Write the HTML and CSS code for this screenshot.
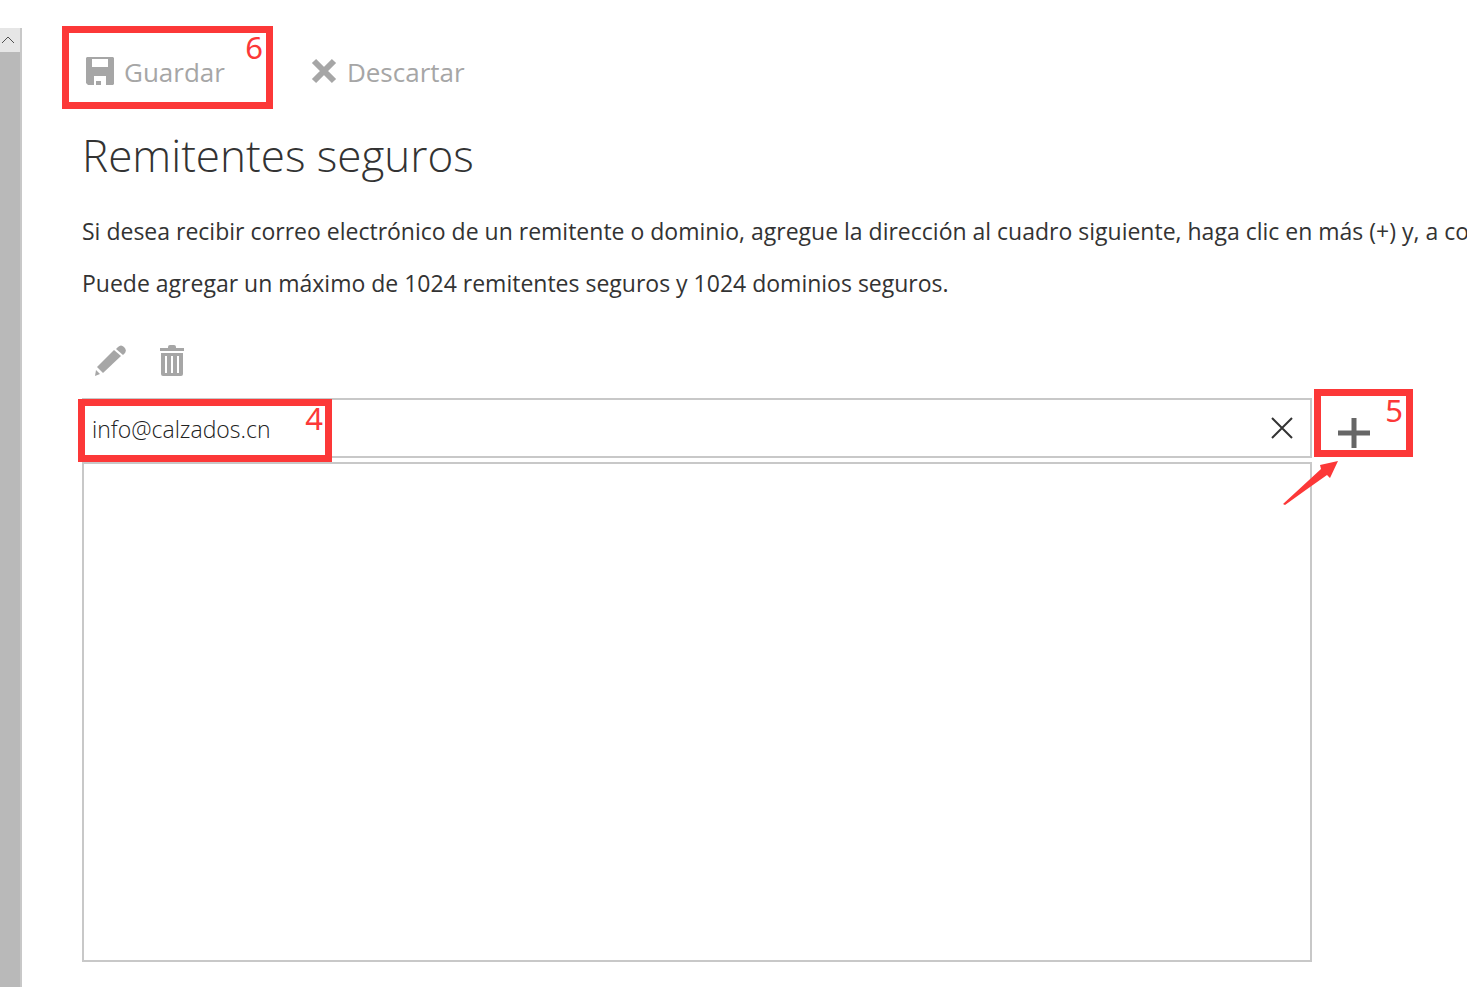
FILE: index.html
```
<!DOCTYPE html>
<html lang="es">
<head>
    <meta charset="UTF-8">
    <title>Remitentes seguros</title>
    <link rel="stylesheet" href="styles.css">
</head>
<body>
<div class="scrollbar">
    <button class="scroll-up" type="button" aria-label="Subir">
        <svg width="14" height="8" viewBox="0 0 14 8"><path d="M1 7L7 1L13 7"/></svg>
    </button>
</div>
<main class="content">
    <div class="toolbar">
        <div class="marked">
            <button class="command" type="button">
                <svg class="fill" width="28" height="30" viewBox="0 0 28 30">
                    <path fill-rule="evenodd" d="M1 0H27L28 1V27L27 28H20V19H8V28H2L0 26V1ZM6 2V10H22V2Z"/>
                    <path d="M10 24H15V28H10Z"/>
                </svg>
                Guardar
            </button>
            <span class="mark mark-save">6</span>
        </div>
        <button class="command" type="button">
            <svg width="26" height="30" viewBox="0 0 26 30"><path class="cross" d="M3 4L23 24M23 4L3 24"/></svg>
            Descartar
        </button>
    </div>
    <h1>Remitentes seguros</h1>
    <p>Si desea recibir correo electrónico de un remitente o dominio, agregue la dirección al cuadro siguiente, haga clic en más (+) y, a con</p>
    <p>Puede agregar un máximo de 1024 remitentes seguros y 1024 dominios seguros.</p>
    <div class="actions">
        <button type="button" aria-label="Editar">
            <svg class="fill" width="32" height="32" viewBox="0 0 32 32">
                <path d="M3 22L20 5L27 11L9 28Z"/>
                <path d="M22 4L24 2Q27 -1 30 2Q33 5 31 8L29 10Z"/>
                <path d="M2 25L6 29L1 31Z"/>
            </svg>
        </button>
        <button type="button" aria-label="Eliminar">
            <svg class="fill" width="24" height="32" viewBox="0 0 24 32">
                <path d="M0 3H8V2Q8 0 10 0H14Q16 0 16 2V3H24V6H0Z"/>
                <path fill-rule="evenodd" d="M1 8H23V29Q23 31 21 31H3Q1 31 1 29ZM5 11V28H7V11ZM11 11V28H13V11ZM17 11V28H19V11Z"/>
            </svg>
        </button>
    </div>
    <form class="entry">
        <div class="field">
            <input type="text" aria-label="Remitente o dominio" value="info@calzados.cn">
            <button class="clear" type="button" aria-label="Borrar">
                <svg width="22" height="22" viewBox="0 0 22 22"><path d="M1 1L21 21M21 1L1 21"/></svg>
            </button>
            <span class="mark mark-field">4</span>
        </div>
        <div class="add-cell">
            <button class="add" type="button" aria-label="Agregar">
                <svg width="32" height="30" viewBox="0 0 32 30"><path d="M16 0V30M0 15H32"/></svg>
            </button>
            <span class="mark mark-add">5</span>
            <svg class="arrow" width="56" height="46" viewBox="0 0 56 46"><path d="M0 43L38 8L37 4L55 0L47 17L44 14Q24 28 2 44Z"/></svg>
        </div>
    </form>
    <div class="list"></div>
</main>
</body>
</html>
```

FILE: styles.css
```
* {
    box-sizing: border-box;
}

body {
    margin: 0;
    display: flex;
    min-height: 100vh;
    background: #fff;
    color: #333;
    font-family: "Open Sans", "Noto Sans", sans-serif;
}

button {
    display: flex;
    align-items: center;
    padding: 0;
    border: 0;
    background: none;
    font-family: inherit;
    cursor: pointer;
}

svg {
    display: block;
    fill: none;
}

.scrollbar {
    flex: none;
    width: 22px;
    margin-top: 28px;
    border-right: 2px solid #c8c8c8;
    background: #b9b9b9;
}

.scroll-up {
    justify-content: center;
    width: 100%;
    height: 24px;
    padding-right: 4px;
    background: #e6e6e6;
}

.scroll-up svg {
    stroke: #505050;
    stroke-width: 1;
}

.content {
    flex: 1;
    min-width: 0;
    display: flex;
    flex-direction: column;
    padding: 52px 0 25px 60px;
    overflow: hidden;
}

.toolbar {
    display: flex;
    gap: 86px;
    padding-left: 4px;
}

.marked {
    position: relative;
}

.command {
    gap: 10px;
    height: 40px;
    color: #a6a6a6;
    font-size: 26px;
    line-height: 40px;
}

.fill {
    fill: #a6a6a6;
}

.cross {
    stroke: #a6a6a6;
    stroke-width: 6;
}

h1 {
    margin: 31px 0 28px;
    font-size: 44px;
    font-weight: 300;
    line-height: 64px;
}

p {
    margin: 0 0 20px;
    font-size: 23px;
    line-height: 32px;
    white-space: nowrap;
}

.actions {
    display: flex;
    align-items: center;
    gap: 34px;
    margin: 26px 0 21px;
    padding-left: 12px;
}

.entry {
    display: flex;
    margin-bottom: 4px;
}

.field {
    position: relative;
    flex: 1;
    display: flex;
    height: 60px;
    padding: 0 17px 0 8px;
    border: 2px solid #c8c8c8;
}

.field input {
    flex: 1;
    min-width: 0;
    padding: 2px 0 0;
    border: 0;
    outline: 0;
    color: #222;
    font-family: inherit;
    font-size: 23px;
    font-weight: 300;
}

.clear svg {
    stroke: #333;
    stroke-width: 2;
}

.add-cell {
    position: relative;
    display: flex;
    width: 155px;
    padding: 10px 0 0 26px;
}

.add svg {
    stroke: #666;
    stroke-width: 5;
}

.list {
    flex: 1;
    min-height: 200px;
    margin-right: 155px;
    border: 2px solid #c8c8c8;
}

/* numbered red frames over the controls */
.mark {
    position: absolute;
    border: 7px solid #fc3838;
    color: #fc3838;
    font-family: "Noto Sans", sans-serif;
    font-size: 31px;
    line-height: 28px;
    text-align: right;
    pointer-events: none;
}

.mark-save {
    top: -26px;
    left: -24px;
    width: 211px;
    height: 83px;
    padding-right: 3px;
}

.mark-field {
    top: -1px;
    left: -6px;
    width: 254px;
    height: 63px;
    padding-right: 2px;
    line-height: 24px;
}

.mark-add {
    top: -9px;
    left: 2px;
    width: 99px;
    height: 68px;
    padding-right: 3px;
}

.arrow {
    position: absolute;
    top: 63px;
    left: -29px;
    fill: #fc3838;
}
```
